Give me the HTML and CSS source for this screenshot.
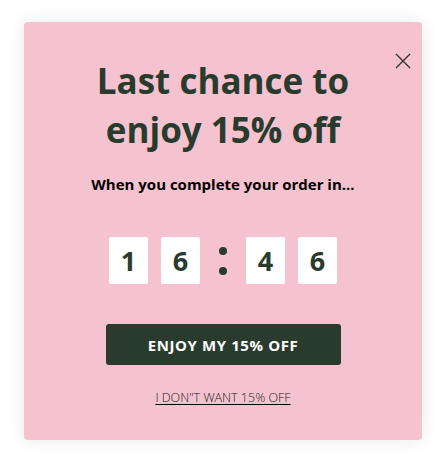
FILE: index.html
```html
<!DOCTYPE html>
<html lang="en">
<head>
<meta charset="utf-8">
<title>Last chance</title>
<link rel="stylesheet" href="styles.css">
</head>
<body>
<div class="page">
  <div class="card">
    <button class="close" aria-label="Close">
      <svg width="16" height="16" viewBox="0 0 16 16"><path d="M1 1 L15 15 M15 1 L1 15" stroke="#333" stroke-width="1.4" fill="none"/></svg>
    </button>
    <h1 class="title">Last chance to<br>enjoy 15% off</h1>
    <p class="subtitle">When you complete your order in...</p>
    <div class="timer">
      <div class="digit">1</div>
      <div class="digit">6</div>
      <div class="colon"><span class="dot"></span><span class="dot"></span></div>
      <div class="digit">4</div>
      <div class="digit">6</div>
    </div>
    <button class="cta">ENJOY MY 15% OFF</button>
    <a class="decline" href="#">I DON"T WANT 15% OFF</a>
  </div>
</div>
</body>
</html>
```

FILE: styles.css
```css
html, body {
  margin: 0;
  padding: 0;
  background: #ffffff;
}
.page {
  padding: 22px 24px;
  font-family: "Open Sans", "Noto Sans", sans-serif;
}
.card {
  position: relative;
  width: 398px;
  height: 418px;
  box-sizing: border-box;
  background: #f5c2cf;
  border-radius: 4px;
  box-shadow: 0 0 18px rgba(0, 0, 0, 0.09);
  padding-top: 34px;
  display: flex;
  flex-direction: column;
  align-items: center;
}
.close {
  position: absolute;
  top: 31px;
  right: 11px;
  width: 16px;
  height: 16px;
  padding: 0;
  border: 0;
  background: none;
  display: flex;
}
.title {
  margin: 0;
  font-size: 35px;
  line-height: 49px;
  font-weight: 700;
  color: #283b2d;
  text-align: center;
}
.subtitle {
  margin: 20px 0 0;
  font-size: 15px;
  line-height: 20px;
  font-weight: 700;
  color: #000;
}
.timer {
  margin-top: 43px;
  display: flex;
  align-items: center;
  gap: 13px;
}
.digit {
  width: 39px;
  height: 47px;
  background: #fff;
  border-radius: 2px;
  display: flex;
  align-items: center;
  justify-content: center;
  font-size: 27px;
  font-weight: 700;
  color: #283b2d;
}
.colon {
  width: 20px;
  height: 47px;
  display: flex;
  flex-direction: column;
  align-items: center;
  justify-content: center;
  gap: 12px;
}
.dot {
  width: 8px;
  height: 8px;
  border-radius: 50%;
  background: #283b2d;
}
.cta {
  margin-top: 40px;
  width: 235px;
  height: 41px;
  border: 0;
  border-radius: 3px;
  background: #283b2d;
  color: #fff;
  font-family: inherit;
  font-size: 15px;
  font-weight: 700;
  letter-spacing: 0.6px;
}
.decline {
  margin-top: 24px;
  font-size: 12.5px;
  line-height: 18px;
  font-weight: 300;
  color: #222;
  text-decoration: underline;
  text-decoration-color: #000;
  text-underline-offset: 2px;
}
```
